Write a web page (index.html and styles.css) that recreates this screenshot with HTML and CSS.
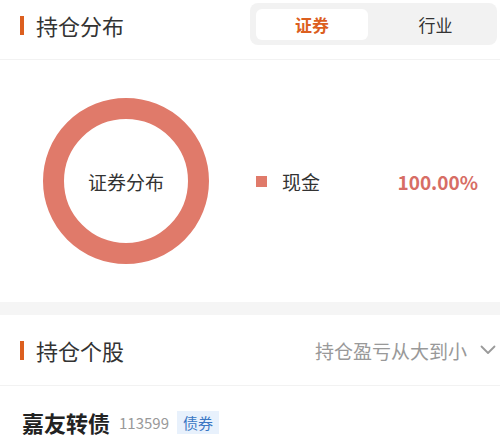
FILE: index.html
```html
<!DOCTYPE html>
<html lang="zh">
<head>
<meta charset="utf-8">
<link rel="stylesheet" href="styles.css">
</head>
<body>
<section class="panel">
  <div class="head head-top">
    <div class="title"><span class="bar"></span>持仓分布</div>
    <div class="tabs">
      <div class="tab active">证券</div>
      <div class="tab other">行业</div>
    </div>
  </div>
  <div class="chart">
    <div class="donut"><span>证券分布</span></div>
    <div class="legend">
      <span class="dot"></span>
      <span class="lname">现金</span>
      <span class="lval">100.00%</span>
    </div>
  </div>
</section>
<div class="gap"></div>
<section class="panel">
  <div class="head head-stock">
    <div class="title"><span class="bar"></span>持仓个股</div>
    <div class="sort">持仓盈亏从大到小
      <svg class="chev" width="16" height="10" viewBox="0 0 16 10"><path d="M1.5 1.5 L8 8 L14.5 1.5" fill="none" stroke="#9a9a9a" stroke-width="1.8" stroke-linecap="round" stroke-linejoin="round"/></svg>
    </div>
  </div>
  <div class="stock">
    <span class="sname">嘉友转债</span>
    <span class="scode">113599</span>
    <span class="tag">债券</span>
  </div>
</section>
</body>
</html>
```
FILE: styles.css
```css
* { box-sizing: border-box; }
html, body { margin: 0; padding: 0; background: #fff; }
body {
  width: 500px;
  font-family: "Noto Sans CJK SC", "Noto Sans", sans-serif;
  color: #333;
  overflow: hidden;
}
.panel { background: #fff; }
.head {
  display: flex;
  align-items: center;
  justify-content: space-between;
  border-bottom: 1px solid #f2f2f2;
}
.head-top { height: 60px; align-items: flex-start; }
.head-top .title { margin-top: 9px; }
.title {
  display: flex;
  align-items: center;
  font-size: 22px;
  line-height: 32px;
  color: #333;
  padding-left: 20px;
}
.bar {
  width: 4px;
  height: 19px;
  background: #dc5f1f;
  margin-right: 12px;
}
.tabs {
  display: flex;
  width: 247px;
  height: 42px;
  margin: 3px 3px 0 0;
  padding: 6px 6px 5px;
  background: #f2f2f2;
  border-radius: 8px;
}
.tab {
  flex: 1;
  display: flex;
  align-items: center;
  justify-content: center;
  font-size: 17px;
  color: #333;
}
.tab.other { padding-left: 12px; }
.tab.active {
  flex: 0 0 112px;
  background: #fff;
  border-radius: 6px;
  color: #dc5f1f;
  font-weight: 700;
}
.chart {
  display: flex;
  align-items: center;
  height: 242px;
  padding-left: 43px;
}
.donut {
  width: 166px;
  height: 166px;
  border-radius: 50%;
  border: 21px solid #e07a6a;
  display: flex;
  align-items: center;
  justify-content: center;
  font-size: 19px;
  color: #333;
}
.legend {
  display: flex;
  align-items: center;
  margin-left: 47px;
  flex: 1;
  padding-right: 22px;
}
.dot {
  width: 11px;
  height: 11px;
  background: #e07a6a;
  margin-right: 15px;
}
.lname { font-size: 19px; color: #333; }
.lval {
  margin-left: auto;
  font-size: 19px;
  font-weight: 600;
  color: #d76d65;
}
.gap { height: 13px; background: #f5f5f5; }
.head-stock { height: 71px; }
.sort {
  display: flex;
  align-items: center;
  font-size: 19px;
  color: #999;
  padding-right: 4px;
}
.chev { margin-left: 13px; }
.stock {
  display: flex;
  align-items: center;
  padding: 20px 0 0 22px;
}
.sname { font-size: 22px; font-weight: 700; color: #222; }
.scode { font-size: 15px; color: #999; margin-left: 9px; }
.tag {
  margin-left: 8px;
  font-size: 15px;
  color: #3a77c4;
  background: #e8f1fc;
  padding: 0 6px;
  height: 23px;
  line-height: 23px;
}
```
